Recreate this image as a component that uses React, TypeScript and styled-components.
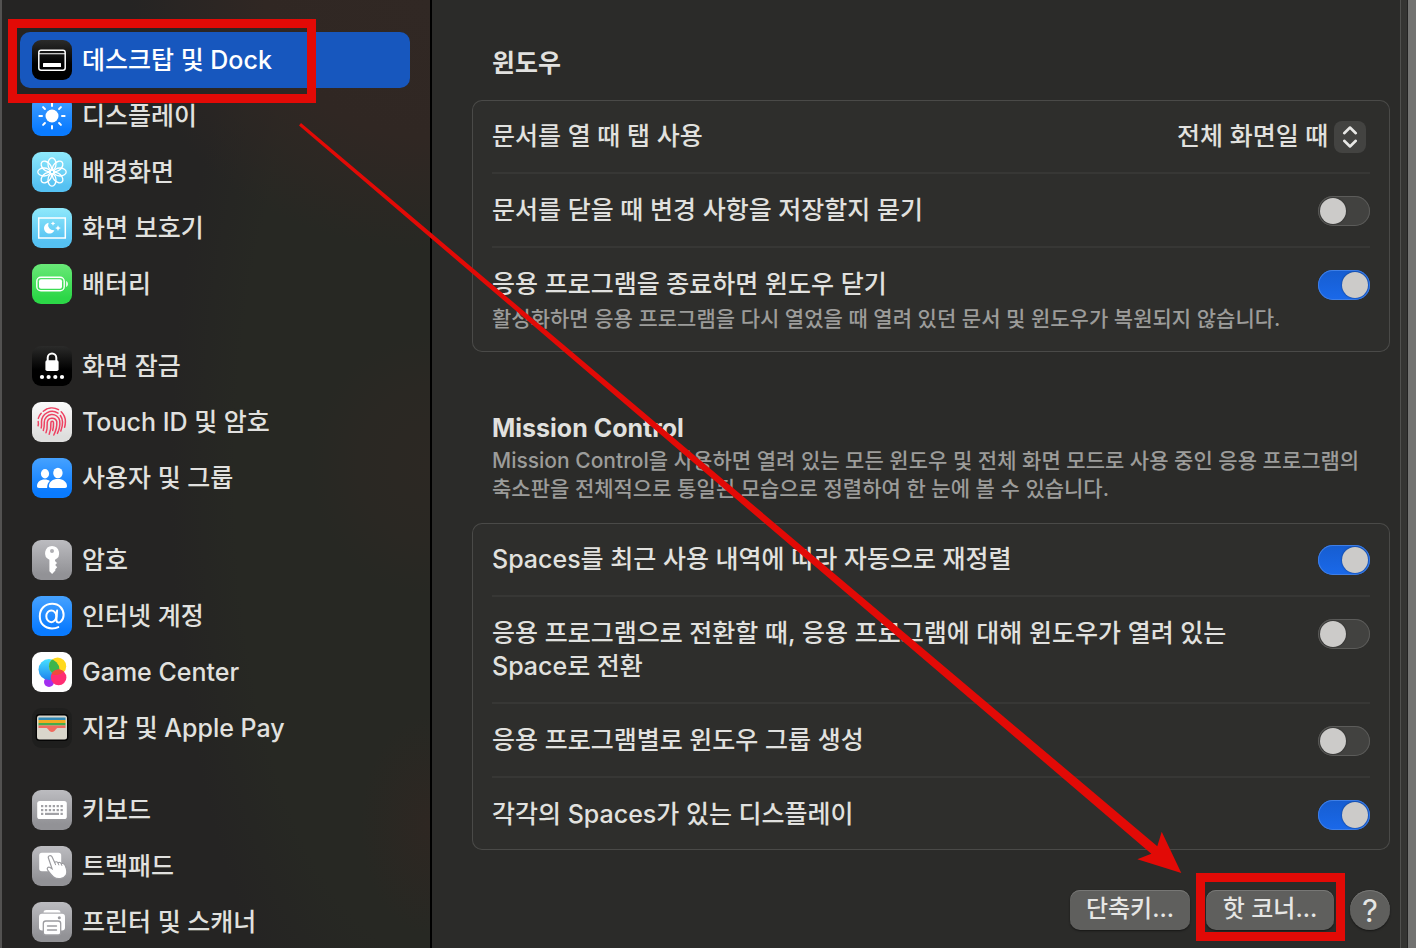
import React, { useState } from 'react';
import styled, { createGlobalStyle } from 'styled-components';

const RED = '#e20a06';
const FONT = '"Inter", "Noto Sans CJK KR", sans-serif';

const GlobalStyle = createGlobalStyle`
  *, *::before, *::after { box-sizing: border-box; }
  body { margin: 0; background: #2b2b29; font-family: ${FONT}; }
  button, select { font-family: inherit; }
`;

const Page = styled.div`
  position: relative;
  display: flex;
  height: 100vh;
  overflow: hidden;
  color: #e1e1df;
  font-size: 25px;
  line-height: 33px;
`;

const Sidebar = styled.nav`
  flex: 0 0 432px;
  padding: 32px 20px 0 18px;
  border-left: 2px solid #535251;
  border-right: 2px solid #000;
  background:
    radial-gradient(ellipse 300px 250px at 100% 0%, #312824 0%, #302723 55%, transparent 100%),
    radial-gradient(ellipse 120px 130px at 100% 49%, #2c2823 0%, #2a2823 60%, transparent 100%),
    radial-gradient(ellipse 70px 110px at 100% 87%, #2e2722 0%, transparent 100%),
    radial-gradient(ellipse 260px 640px at 100% 50%, #272823 0%, #272823 75%, transparent 100%),
    #252423;
`;

const NavList = styled.ul`
  margin: 0 0 26px;
  padding: 0;
  list-style: none;
`;

const NavItem = styled.li`
  position: relative;
`;

const NavLink = styled.a<{ $active?: boolean }>`
  display: flex;
  align-items: center;
  gap: 10px;
  height: 56px;
  padding: 0 12px;
  border-radius: 10px;
  color: ${(p) => (p.$active ? '#ffffff' : '#e1e1df')};
  background: ${(p) => (p.$active ? '#1757be' : 'transparent')};
  font-weight: 500;
  text-decoration: none;
  white-space: nowrap;
`;

const IconTile = styled.svg`
  flex: none;
  width: 40px;
  height: 40px;
  border-radius: 9px;
`;

const Content = styled.main`
  flex: 1;
  min-width: 0;
  padding: 47px 10px 0 40px;
  background: #2b2b29;
`;

const Section = styled.section`
  margin-bottom: 60px;
  &:last-of-type { margin-bottom: 40px; }
`;

const SectionHead = styled.header`
  padding: 0 20px 20px;
`;

const Heading = styled.h2`
  margin: 0;
  font-size: 25px;
  line-height: 33px;
  font-weight: 700;
`;

const Description = styled.p`
  margin: 2px 0 0;
  color: #9c9c9a;
  font-size: 21px;
  line-height: 28px;
  font-weight: 500;
  word-break: keep-all;
`;

const Card = styled.div`
  padding: 0 20px;
  border-radius: 10px;
  background: #2e2e2c;
  box-shadow: inset 0 0 0 1px #4a4a48;
`;

const Row = styled.div`
  display: flex;
  align-items: flex-start;
  justify-content: space-between;
  gap: 32px;
  padding: 20px 0 19px;
  & + & { border-top: 2px solid #373735; }
`;

const RowText = styled.div`
  min-width: 0;
`;

const RowLabel = styled.label`
  display: block;
  font-weight: 500;
  word-break: keep-all;
`;

const RowNote = styled(Description)`
  margin-top: 4px;
`;

const Switch = styled.input`
  appearance: none;
  flex: none;
  width: 52px;
  height: 30px;
  margin: 2px 0 0;
  padding: 2px;
  border-radius: 15px;
  background: #424240;
  box-shadow: inset 0 0 0 1px #5c5c5a;
  &::before {
    content: '';
    display: block;
    width: 26px;
    height: 26px;
    border-radius: 50%;
    background: #cccbc9;
    box-shadow: 0 0 2px rgba(0, 0, 0, 0.5);
  }
  &:checked {
    background: linear-gradient(#165dd0, #1a69ea);
    box-shadow: inset 0 0 0 1px #3f7fe6;
  }
  &:checked::before { margin-left: auto; }
`;

const SelectBox = styled.div`
  display: flex;
  align-items: center;
  gap: 5px;
  height: 33px;
  padding-right: 4px;
`;

const Select = styled.select`
  appearance: none;
  padding: 0;
  border: 0;
  background: transparent;
  color: inherit;
  font-size: 25px;
  line-height: 33px;
  font-weight: 500;
`;

const Stepper = styled.svg`
  width: 32px;
  height: 32px;
  border-radius: 8px;
  background: #434341;
  pointer-events: none;
`;

const Footer = styled.footer`
  display: flex;
  justify-content: flex-end;
  gap: 16px;
`;

const ButtonSlot = styled.div`
  position: relative;
`;

const PushButton = styled.button<{ $width: number }>`
  width: ${(p) => p.$width}px;
  height: 40px;
  padding: 0 0 4px;
  border: 0;
  border-radius: 10px;
  background: #5f5f5d;
  box-shadow: inset 0 1px 0 #777775, 0 1px 2px rgba(0, 0, 0, 0.5);
  color: #e6e6e4;
  font-size: 24px;
  line-height: 33px;
  font-weight: 500;
`;

const HelpButton = styled(PushButton)`
  padding: 0;
  border-radius: 50%;
  font-size: 31px;
  font-weight: 400;
`;

const ScrollTrack = styled.div`
  flex: 0 0 8px;
  border-left: 1px solid #50504e;
  border-right: 1px solid #232323;
  background: #343432;
`;

const WindowEdge = styled.div`
  flex: 0 0 8px;
  background: #737371;
`;

const Highlight = styled.span<{ $inset: string }>`
  position: absolute;
  inset: ${(p) => p.$inset};
  z-index: 1;
  border: 9px solid ${RED};
  pointer-events: none;
`;

const Arrow = styled.svg`
  position: absolute;
  top: 0;
  left: 0;
  z-index: 2;
  pointer-events: none;
`;

type Tone = 'black' | 'blue' | 'sky' | 'green' | 'white' | 'gray' | 'plain' | 'dark';

const tones: Record<Tone, [string, string]> = {
  black: ['#2b2b2a', '#000000'],
  blue: ['#46a2ff', '#0a7bff'],
  sky: ['#8fe9fb', '#55c1f2'],
  green: ['#6ae978', '#2cd747'],
  white: ['#fbfbfb', '#dededd'],
  gray: ['#bcbcc0', '#929296'],
  plain: ['#ffffff', '#ffffff'],
  dark: ['#1f1f1e', '#1e1e1d'],
};

function Tile({ name, tone, children }: { name: string; tone: Tone; children: React.ReactNode }) {
  const id = `tile-${name}`;
  return (
    <IconTile viewBox="0 0 40 40" aria-hidden="true">
      <defs>
        <linearGradient id={id} x1="0" y1="0" x2="0" y2="1">
          <stop offset="0" stopColor={tones[tone][0]} />
          <stop offset={tone === 'black' ? '0.6' : '0.85'} stopColor={tones[tone][1]} />
        </linearGradient>
      </defs>
      <rect width="40" height="40" fill={`url(#${id})`} />
      {children}
    </IconTile>
  );
}

const rays = [0, 45, 90, 135, 180, 225, 270, 315];

const icons: Record<string, { tone: Tone; art: React.ReactNode }> = {
  dock: {
    tone: 'black',
    art: (
      <>
        <rect x="6.8" y="10.3" width="26.4" height="20" rx="2.2" fill="none" stroke="#fff" strokeWidth="1.5" />
        <path d="M7 13.8h26" stroke="#fff" strokeWidth="1.1" />
        <rect x="11" y="23" width="18" height="4" rx="0.6" fill="#fff" />
      </>
    ),
  },
  display: {
    tone: 'blue',
    art: (
      <>
        <circle cx="20" cy="20" r="6.5" fill="#fff" />
        {rays.map((a) => (
          <path key={a} d="M20 7.4v2.6" stroke="#fff" strokeWidth="2" strokeLinecap="round" transform={`rotate(${a} 20 20)`} />
        ))}
      </>
    ),
  },
  wallpaper: {
    tone: 'sky',
    art: (
      <g fill="none" stroke="#fff" strokeWidth="1.3">
        {rays.map((a) => (
          <ellipse key={a} cx="20" cy="12" rx="4" ry="6.2" transform={`rotate(${a} 20 20)`} />
        ))}
        <circle cx="20" cy="20" r="1.9" />
      </g>
    ),
  },
  saver: {
    tone: 'sky',
    art: (
      <>
        <rect x="6.7" y="10" width="26.6" height="20" fill="none" stroke="#fff" strokeWidth="1.5" />
        <path d="M16.6 14.8a5.4 5.4 0 1 0 5.8 7.4 5.4 5.4 0 0 1-5.8-7.4z" fill="#fff" />
        <path d="M21 13.2l.7 1.6 1.6.7-1.6.7-.7 1.6-.7-1.6-1.6-.7 1.6-.7zM26 17.2l.9 2 2 .9-2 .9-.9 2-.9-2-2-.9 2-.9z" fill="#fff" />
      </>
    ),
  },
  battery: {
    tone: 'green',
    art: (
      <>
        <rect x="4.8" y="13.2" width="27.4" height="13.6" rx="4" fill="none" stroke="#fff" strokeWidth="1.4" />
        <rect x="7" y="15.3" width="23" height="9.4" rx="2" fill="#fff" />
        <path d="M34.2 17v6c2.2-1 2.2-5 0-6z" fill="#fff" />
      </>
    ),
  },
  lock: {
    tone: 'black',
    art: (
      <>
        <path d="M15.7 15v-3.3a4.3 4.3 0 0 1 8.6 0V15" fill="none" stroke="#fff" strokeWidth="2" />
        <rect x="13.4" y="14.2" width="13.2" height="10.8" rx="1.8" fill="#fff" />
        {[10, 16.6, 23.3, 30].map((x) => (
          <circle key={x} cx={x} cy="31" r="2.1" fill="#fff" />
        ))}
      </>
    ),
  },
  touch: {
    tone: 'white',
    art: (
      <g fill="none" stroke="#ee4262" strokeWidth="1.5" strokeLinecap="round">
        <path d="M11.3 9.3a13.4 13.4 0 0 1 15.2-1.6M29.2 9.7a13.6 13.6 0 0 1 4.2 9.7c0 2.2-.2 3.9-.8 5.8M6.3 16.4c.6-2 1.5-3.7 2.9-5.1M6.2 19.6c.3 1.4.2 3-.1 4.2" />
        <path d="M9.2 25.9c.7-2.7.2-4.3.3-6.2A10.6 10.6 0 0 1 26 11.2M28.4 13.5c2.6 3.6 2.6 9.8.4 15.5" />
        <path d="M11.3 28.4c1.2-3.2 1-5.6 1-8.3a7.8 7.8 0 0 1 15.4-1.5c.6 4.3-.3 8.6-2.3 12.8" />
        <path d="M14 30.8c1.5-3.7 1.3-7 1.2-10.2a4.9 4.9 0 0 1 9.6-.8c.3 4.7-.8 8.9-3 13.2" />
        <path d="M17.2 32.3c1.7-4.1 1.9-7.3 1.7-11.6 0-2 2.5-2 2.6 0 .1 3.2-.2 5.6-.8 7.8" />
      </g>
    ),
  },
  users: {
    tone: 'blue',
    art: (
      <g fill="#fff">
        <ellipse cx="13" cy="15.8" rx="4.1" ry="4.7" />
        <ellipse cx="25.9" cy="15" rx="4.7" ry="5.2" />
        <path d="M5 28.2c0-4.2 3.2-6.8 7.8-6.8 2 0 3.8.5 5 1.5-1.5 1.4-2.6 3.2-2.7 7H7c-1.4 0-2-.6-2-1.7z" />
        <path d="M16.9 28c.2-4.3 3.8-7 9-7s8.9 2.7 9.1 7c0 1.3-.6 1.9-2 1.9H18.8c-1.3 0-1.9-.6-1.9-1.9z" />
      </g>
    ),
  },
  key: {
    tone: 'gray',
    art: (
      <path
        fill="#fff"
        fillRule="evenodd"
        d="M20 6a7.2 7.2 0 0 1 3 13.7v1.2l2 2-1.8 2.2 2 2.2-1.9 2 .1 1.3-3.3 3.3-2.7-2.7V19.8A7.2 7.2 0 0 1 20 6zm0 3a2 2 0 1 0 0 4 2 2 0 0 0 0-4z"
      />
    ),
  },
  at: {
    tone: 'blue',
    art: (
      <g fill="none" stroke="#fff" strokeWidth="2" strokeLinecap="round">
        <ellipse cx="19.3" cy="20.3" rx="5" ry="5.9" />
        <path d="M25.1 14.5l-.7 9c-.1 3.6 2.6 3.4 4.2 2.2 2.3-1.8 3-4.4 3-6.6C31.6 12.500 27 7.800 20.200 7.800 12.800 7.800 7.800 13 7.800 20.200c0 7.400 4.800 12.200 12.200 12.200 2.600 0 4.600-.4 6.300-1.300" />
      </g>
    ),
  },
  game: {
    tone: 'plain',
    art: (
      <>
        <defs>
          <linearGradient id="bubble-blue" x1="0" y1="0" x2="0" y2="1">
            <stop offset="0" stopColor="#47e1ff" />
            <stop offset="1" stopColor="#1d83ee" />
          </linearGradient>
          <clipPath id="bubble-clip">
            <circle cx="17" cy="17.6" r="10.5" />
          </clipPath>
        </defs>
        <circle cx="17" cy="30" r="5" fill="#a22ff0" />
        <circle cx="17" cy="17.6" r="10.5" fill="url(#bubble-blue)" />
        <circle cx="25.6" cy="14.2" r="8.6" fill="#ffd91c" />
        <circle cx="25.6" cy="14.2" r="8.6" fill="#3cb54c" clipPath="url(#bubble-clip)" />
        <circle cx="26.6" cy="25.4" r="7.8" fill="#ff2d72" />
        <path d="M19.5 22.200a7.800 7.800 0 0 1 12.300-2.700c-3 3.300-8 4.300-12.300 2.700z" fill="#f0493c" />
      </>
    ),
  },
  wallet: {
    tone: 'dark',
    art: (
      <>
        <rect x="3.6" y="6" width="32.8" height="27" rx="4" fill="#050505" />
        <rect x="5" y="7.5" width="30" height="24" rx="2.5" fill="#d9d6cb" />
        <path d="M6.5 9.500h27V12h-27z" fill="#3189b7" />
        <path d="M6.5 12h27v3h-27z" fill="#f2ab22" />
        <path d="M6.5 15h27v2.500h-27z" fill="#44ad4c" />
        <path d="M6.5 17.500h27V20h-7.200c-1.500 0-2 .6-2.600 1.500-.9 1.500-2 2.500-3.700 2.500s-2.800-1-3.700-2.500c-.6-.9-1.100-1.500-2.600-1.500H6.500z" fill="#f06b5f" />
      </>
    ),
  },
  keyboard: {
    tone: 'gray',
    art: (
      <>
        <rect x="5.2" y="11" width="29.6" height="18" rx="2.6" fill="#fff" />
        <g fill="#a1a1a5">
          {[15, 19].map((y) => [9, 12.9, 16.8, 20.7, 24.6, 28.5].map((x) => <rect key={`${x}-${y}`} x={x} y={y} width="2.3" height="2.2" />))}
          <rect x="9" y="22.8" width="2.3" height="2.2" />
          <rect x="13" y="22.8" width="14" height="2.2" />
          <rect x="28.5" y="22.8" width="2.3" height="2.2" />
        </g>
      </>
    ),
  },
  trackpad: {
    tone: 'gray',
    art: (
      <>
        <rect x="7.2" y="6.8" width="22" height="18.4" rx="2.6" fill="#fff" />
        <path
          d="M16.400 12c-.8-2.200 2.600-3.500 3.600-1.300l2.700 5.700c1-1 2.700-.8 3.300.4 1.200-.8 2.800-.3 3.200.9 1.800-.7 3.300.3 4 1.900 1.300 3.200 2.700 6.400.9 9.400-2.600 4.200-8.700 4.800-12.500 1.900-2.400-1.900-4-4.300-5.900-6.800-1.300-1.900.4-3.700 2.400-2.500l2 1.300z"
          fill="#fff"
          stroke="#9c9ca0"
          strokeWidth="1.2"
        />
        <path d="M22.700 16.400l1 2.700M26 16.800l.9 2.500M29.200 17.700l.8 2.200" stroke="#9c9ca0" strokeWidth="1" />
      </>
    ),
  },
  printer: {
    tone: 'gray',
    art: (
      <>
        <path d="M11.5 10.400c.2-1.600 1.200-2.400 2.800-2.400h11.400c1.600 0 2.600.8 2.800 2.400z" fill="#fff" />
        <rect x="7" y="11.8" width="26" height="16.600" rx="3" fill="#fff" />
        <circle cx="27.3" cy="15.7" r="1.5" fill="#9c9ca0" />
        <rect x="11.3" y="19" width="17.4" height="14" rx="2.6" fill="#fff" stroke="#9c9ca0" strokeWidth="1.3" />
        <path d="M15.5 24h9M15.5 28h9" stroke="#9c9ca0" strokeWidth="1.4" strokeLinecap="round" />
      </>
    ),
  },
};

const groups: [string, string][][] = [
  [
    ['dock', '데스크탑 및 Dock'],
    ['display', '디스플레이'],
    ['wallpaper', '배경화면'],
    ['saver', '화면 보호기'],
    ['battery', '배터리'],
  ],
  [
    ['lock', '화면 잠금'],
    ['touch', 'Touch ID 및 암호'],
    ['users', '사용자 및 그룹'],
  ],
  [
    ['key', '암호'],
    ['at', '인터넷 계정'],
    ['game', 'Game Center'],
    ['wallet', '지갑 및 Apple Pay'],
  ],
  [
    ['keyboard', '키보드'],
    ['trackpad', '트랙패드'],
    ['printer', '프린터 및 스캐너'],
  ],
];

function ToggleRow({ id, label, note, on = false }: { id: string; label: string; note?: string; on?: boolean }) {
  const [checked, setChecked] = useState(on);
  return (
    <Row>
      <RowText>
        <RowLabel htmlFor={id}>{label}</RowLabel>
        {note && <RowNote>{note}</RowNote>}
      </RowText>
      <Switch id={id} type="checkbox" role="switch" checked={checked} onChange={(e) => setChecked(e.target.checked)} />
    </Row>
  );
}

export default function App() {
  return (
    <Page>
      <GlobalStyle />
      <Sidebar>
        {groups.map((group) => (
          <NavList key={group[0][0]}>
            {group.map(([icon, label]) => (
              <NavItem key={icon}>
                <NavLink href={`#${icon}`} $active={icon === 'dock'}>
                  <Tile name={icon} tone={icons[icon].tone}>
                    {icons[icon].art}
                  </Tile>
                  {label}
                </NavLink>
                {icon === 'dock' && <Highlight $inset="-13px 94px -15px -12px" />}
              </NavItem>
            ))}
          </NavList>
        ))}
      </Sidebar>
      <Content>
        <Section>
          <SectionHead>
            <Heading>윈도우</Heading>
          </SectionHead>
          <Card>
            <Row>
              <RowLabel htmlFor="tabs">문서를 열 때 탭 사용</RowLabel>
              <SelectBox>
                <Select id="tabs" defaultValue="fullscreen">
                  <option value="fullscreen">전체 화면일 때</option>
                </Select>
                <Stepper viewBox="0 0 32 32" aria-hidden="true">
                  <path d="M10.2 12.200L16 6.500l5.800 5.700M10.200 19.800l5.800 5.700 5.800-5.700" fill="none" stroke="#e8e8e6" strokeWidth="2.6" strokeLinecap="round" strokeLinejoin="round" />
                </Stepper>
              </SelectBox>
            </Row>
            <ToggleRow id="ask-save" label="문서를 닫을 때 변경 사항을 저장할지 묻기" />
            <ToggleRow
              id="close-windows"
              label="응용 프로그램을 종료하면 윈도우 닫기"
              note="활성화하면 응용 프로그램을 다시 열었을 때 열려 있던 문서 및 윈도우가 복원되지 않습니다."
              on
            />
          </Card>
        </Section>
        <Section>
          <SectionHead>
            <Heading>Mission Control</Heading>
            <Description>
              Mission Control을 사용하면 열려 있는 모든 윈도우 및 전체 화면 모드로 사용 중인 응용 프로그램의 축소판을 전체적으로 통일된 모습으로 정렬하여 한 눈에 볼 수 있습니다.
            </Description>
          </SectionHead>
          <Card>
            <ToggleRow id="rearrange" label="Spaces를 최근 사용 내역에 따라 자동으로 재정렬" on />
            <ToggleRow id="switch-space" label="응용 프로그램으로 전환할 때, 응용 프로그램에 대해 윈도우가 열려 있는 Space로 전환" />
            <ToggleRow id="group-windows" label="응용 프로그램별로 윈도우 그룹 생성" />
            <ToggleRow id="separate" label="각각의 Spaces가 있는 디스플레이" on />
          </Card>
        </Section>
        <Footer>
          <PushButton type="button" $width={120}>단축키...</PushButton>
          <ButtonSlot>
            <PushButton type="button" $width={128}>핫 코너...</PushButton>
            <Highlight $inset="-17px -11px -11px -10px" />
          </ButtonSlot>
          <HelpButton type="button" $width={40} aria-label="도움말">?</HelpButton>
        </Footer>
      </Content>
      <ScrollTrack />
      <WindowEdge />
      <Arrow width="1416" height="948" viewBox="0 0 1416 948" aria-hidden="true">
        <path d="M301 123L1157.3 846.3 1161.7 831.7 1181.3 873 1137.3 859.3 1151.3 853.7 299 125.5z" fill={RED} />
      </Arrow>
    </Page>
  );
}
